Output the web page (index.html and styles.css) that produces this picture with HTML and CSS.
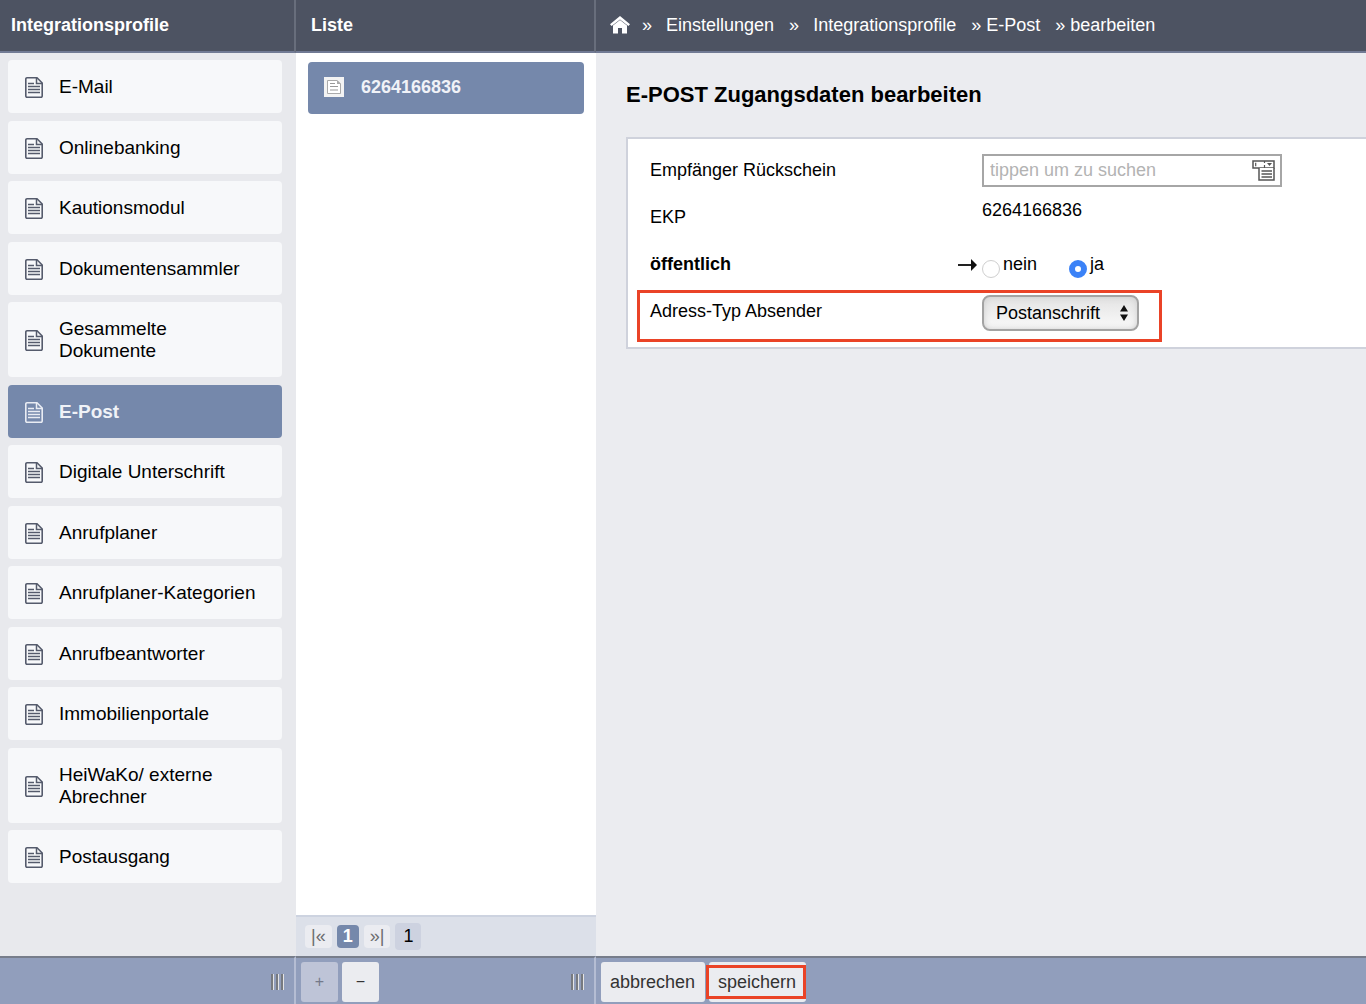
FILE: index.html
```
<!DOCTYPE html>
<html lang="de">
<head>
    <meta charset="UTF-8">
    <meta name="viewport" content="width=device-width, initial-scale=1.0">
    <title>E-POST Zugangsdaten bearbeiten</title>
    <link rel="stylesheet" href="styles.css">
</head>
<body>
    <svg class="symbols" aria-hidden="true">
        <symbol id="doc" viewBox="0 0 18 21">
            <path d="M2 .8H12L17.2 6V19a1.2 1.2 0 0 1-1.2 1.2H2A1.2 1.2 0 0 1 .8 19V2A1.2 1.2 0 0 1 2 .8Z" fill="none" stroke="currentColor" stroke-width="1.6"/>
            <path d="M11.5 1V6.5H17" fill="none" stroke="currentColor" stroke-width="1.5"/>
            <path d="M3 6.5H9M3 9.5H15M3 12.5H15M3 15.5H15" stroke="currentColor" stroke-width="1.4"/>
        </symbol>
    </svg>

    <div class="app">
        <section class="column sidebar">
            <header class="bar">Integrationsprofile</header>
            <nav class="content">
                <ul class="nav-list">
                    <li><a href="#"><svg class="doc"><use href="#doc"/></svg><span>E-Mail</span></a></li>
                    <li><a href="#"><svg class="doc"><use href="#doc"/></svg><span>Onlinebanking</span></a></li>
                    <li><a href="#"><svg class="doc"><use href="#doc"/></svg><span>Kautionsmodul</span></a></li>
                    <li><a href="#"><svg class="doc"><use href="#doc"/></svg><span>Dokumentensammler</span></a></li>
                    <li><a href="#"><svg class="doc"><use href="#doc"/></svg><span>Gesammelte Dokumente</span></a></li>
                    <li><a href="#" class="active"><svg class="doc"><use href="#doc"/></svg><span>E-Post</span></a></li>
                    <li><a href="#"><svg class="doc"><use href="#doc"/></svg><span>Digitale Unterschrift</span></a></li>
                    <li><a href="#"><svg class="doc"><use href="#doc"/></svg><span>Anrufplaner</span></a></li>
                    <li><a href="#"><svg class="doc"><use href="#doc"/></svg><span>Anrufplaner-Kategorien</span></a></li>
                    <li><a href="#"><svg class="doc"><use href="#doc"/></svg><span>Anrufbeantworter</span></a></li>
                    <li><a href="#"><svg class="doc"><use href="#doc"/></svg><span>Immobilienportale</span></a></li>
                    <li><a href="#"><svg class="doc"><use href="#doc"/></svg><span>HeiWaKo/ externe Abrechner</span></a></li>
                    <li><a href="#"><svg class="doc"><use href="#doc"/></svg><span>Postausgang</span></a></li>
                </ul>
            </nav>
            <footer class="toolbar">
                <div class="grip"><i></i><i></i><i></i></div>
            </footer>
        </section>

        <section class="column list">
            <header class="bar">Liste</header>
            <div class="content">
                <a href="#" class="entry">
                    <svg class="entry-icon" viewBox="0 0 20 20">
                        <rect width="20" height="20" fill="#f3f3f3"/>
                        <path d="M3.5 3.5H13L16.5 7V16.5H3.5Z" fill="#fff" stroke="#aaa"/>
                        <path d="M13 3V7H17Z" fill="#aaa"/>
                        <path d="M6 6.5H11M6 9.5H14M6 13H14" stroke="#999" stroke-width="1.2"/>
                    </svg>
                    <span>6264166836</span>
                </a>
            </div>
            <div class="pager">
                <button type="button" class="page">|«</button>
                <button type="button" class="page current">1</button>
                <button type="button" class="page">»|</button>
                <span class="total">1</span>
            </div>
            <footer class="toolbar">
                <button type="button" class="tool disabled" disabled>+</button>
                <button type="button" class="tool">−</button>
                <div class="grip"><i></i><i></i><i></i></div>
            </footer>
        </section>

        <section class="column detail">
            <header class="bar breadcrumb">
                <a href="#" aria-label="Start">
                    <svg class="home" viewBox="0 0 20 18">
                        <path d="M10 0L20 8.2L18.4 10L10 3.4L1.6 10L0 8.2Z" fill="#fff"/>
                        <path d="M10 4L17 9.6V17.5H12V12H8V17.5H3V9.6Z" fill="#fff"/>
                    </svg>
                </a>
                <span class="sep">»</span>
                <a href="#">Einstellungen</a>
                <span class="sep">»</span>
                <a href="#">Integrationsprofile</a>
                <span>» E-Post</span>
                <span>» bearbeiten</span>
            </header>
            <main class="content">
                <h1>E-POST Zugangsdaten bearbeiten</h1>
                <form class="panel" id="profile">
                    <div class="row">
                        <label class="label" for="recipient">Empfänger Rückschein</label>
                        <div class="control">
                            <div class="search">
                                <input type="text" id="recipient" placeholder="tippen um zu suchen">
                                <svg class="lookup" viewBox="0 0 23 21">
                                    <path d="M1 1H22V8H1Z" fill="#fff" stroke="#555" stroke-width="1.5"/>
                                    <path d="M3.7 2.7V6.2M12.5 1V3M12.5 5V8" stroke="#555" stroke-width="1.2"/>
                                    <path d="M15 3H20L17.5 6Z" fill="#555"/>
                                    <path d="M7 8V20H22V8" fill="#fff" stroke="#555" stroke-width="1.5"/>
                                    <path d="M9.5 11H20M9.5 14H20M9.5 17H20" stroke="#555" stroke-width="1.3"/>
                                </svg>
                            </div>
                        </div>
                    </div>
                    <div class="row">
                        <span class="label">EKP</span>
                        <div class="control">6264166836</div>
                    </div>
                    <div class="row">
                        <span class="label required" id="public">öffentlich
                            <svg class="arrow" viewBox="0 0 19 12">
                                <path d="M0 6H14" stroke="#222" stroke-width="2"/>
                                <path d="M13 0L19 6L13 12Z" fill="#111"/>
                            </svg>
                        </span>
                        <div class="control" role="radiogroup" aria-labelledby="public">
                            <label class="choice"><input type="radio" name="public">nein</label>
                            <label class="choice"><input type="radio" name="public" checked>ja</label>
                        </div>
                    </div>
                    <div class="row marked">
                        <label class="label" for="address">Adress-Typ Absender</label>
                        <div class="control">
                            <div class="select">
                                <select id="address">
                                    <option>Postanschrift</option>
                                </select>
                                <svg class="updown" viewBox="0 0 8 16">
                                    <path d="M4 0L8 6.5H0ZM4 16L8 9.5H0Z" fill="#111"/>
                                </svg>
                            </div>
                        </div>
                    </div>
                </form>
            </main>
            <footer class="toolbar">
                <button type="button" class="action">abbrechen</button>
                <button type="submit" form="profile" class="action save">speichern</button>
            </footer>
        </section>
    </div>
</body>
</html>
```

FILE: styles.css
```
*,
*::after {
    box-sizing: border-box;
}
body {
    margin: 0;
    font-family: "Liberation Sans", Arial, sans-serif;
    font-size: 18px;
    color: #000;
}
a {
    color: inherit;
    text-decoration: none;
}
button,
input,
select {
    font: inherit;
}
.symbols {
    display: none;
}
.app {
    display: grid;
    grid-template-columns: 296px 300px 1fr;
    min-height: 100vh;
}
.column {
    display: flex;
    flex-direction: column;
    min-width: 0;
}
.sidebar {
    background-color: #e8e9ed;
}
.list {
    background-color: #fff;
}
.detail {
    background-color: #ebecf0;
}
.content {
    flex-grow: 1;
}

/* Top bar */
.bar {
    height: 53px;
    padding: 0 11px;
    line-height: 50px;
    font-weight: bold;
    color: #fff;
    background-color: #4d5362;
    border-bottom: 2px solid #717a94;
}
.list .bar {
    padding-left: 15px;
}
.sidebar .bar,
.list .bar {
    border-right: 2px solid #686e7c;
}
.breadcrumb {
    display: flex;
    gap: 15px;
    padding-left: 14px;
    font-weight: normal;
    white-space: nowrap;
}
.breadcrumb .sep {
    margin-right: -1px;
}
.breadcrumb a:first-child {
    margin-right: -3px;
}
.home {
    display: block;
    width: 20px;
    height: 18px;
    margin-top: 16px;
}

/* Profile navigation */
.nav-list {
    list-style: none;
    margin: 0;
    padding: 7px 14px 0 8px;
}
.nav-list li {
    margin-bottom: 7px;
}
.nav-list li:nth-child(odd) {
    margin-bottom: 8px;
}
.nav-list a {
    display: flex;
    align-items: center;
    gap: 16px;
    padding: 16px 17px 15px;
    font-size: 19px;
    line-height: 22px;
    background-color: #f7f8fa;
    border-radius: 4px;
}
.nav-list .active {
    font-weight: bold;
    color: #f0f2f7;
    background-color: #7588ab;
}
.doc {
    flex-shrink: 0;
    width: 18px;
    height: 21px;
    color: #555b6c;
}
.active .doc {
    color: #e9ecf3;
}

/* List */
.entry {
    display: flex;
    align-items: center;
    gap: 17px;
    height: 52px;
    margin: 9px 12px;
    padding: 0 16px 2px;
    font-weight: bold;
    color: #f0f2f7;
    background-color: #7588ab;
    border-radius: 4px;
}
.entry-icon {
    width: 20px;
    height: 20px;
}
.pager {
    display: flex;
    align-items: center;
    gap: 5px;
    height: 41px;
    padding: 0 9px;
    background-color: #dce0e9;
    border-top: 2px solid #cdd3e0;
}
.page {
    height: 23px;
    padding: 0 6px 1px;
    line-height: 20px;
    color: #6c6c70;
    background-color: #ebecf1;
    border: none;
    border-radius: 4px;
}
.page.current {
    font-weight: bold;
    color: #fff;
    background-color: #7588ab;
}
.total {
    padding: 0 8px;
    line-height: 27px;
    background-color: #cdd2e0;
    border-radius: 4px;
}

/* Bottom toolbar */
.toolbar {
    display: flex;
    gap: 4px;
    height: 48px;
    padding: 4px 10px 2px 5px;
    background-color: #919ebc;
    border-top: 2px solid #777d8b;
}
.sidebar .toolbar,
.list .toolbar {
    border-right: 2px solid #b5bdd3;
}
.grip {
    display: flex;
    gap: 2px;
    align-self: center;
    margin-left: auto;
}
.grip i {
    width: 3px;
    height: 16px;
    background-color: #777a80;
    border-right: 1px solid #e4e4e4;
}
.tool,
.action {
    padding: 0;
    color: #333;
    background-color: #ebecf0;
    border: none;
    border-radius: 3px;
}
.tool {
    width: 37px;
    font-size: 16px;
}
.tool.disabled {
    color: #74798a;
    background-color: #bec4d7;
}
.action {
    position: relative;
    padding: 0 10px 0 9px;
}
.save::after {
    content: "";
    position: absolute;
    inset: 3px 0 3px -3px;
    border: 3px solid #ea4327;
}

/* Form */
h1 {
    margin: 0;
    padding: 28px 30px;
    font-size: 22px;
    line-height: 28px;
}
.panel {
    margin-left: 30px;
    padding: 8px 22px 12px;
    background-color: #fff;
    border: 2px solid #cfd2dc;
    border-right: none;
}
.row {
    display: grid;
    grid-template-columns: 332px 1fr;
    height: 47px;
}
.label {
    line-height: 47px;
}
.required {
    display: flex;
    align-items: center;
    justify-content: space-between;
    padding-right: 5px;
    font-weight: bold;
}
.arrow {
    width: 19px;
    height: 12px;
}
.control {
    display: flex;
    gap: 32px;
    align-items: flex-start;
    padding-top: 7px;
    line-height: 18px;
}
.search {
    position: relative;
    width: 300px;
}
.search input {
    display: block;
    width: 100%;
    height: 33px;
    padding: 0 36px 0 6px;
    background-color: #fff;
    border: 2px solid #a6a6a6;
}
.search input::placeholder {
    color: #b3b3b3;
}
.lookup {
    position: absolute;
    top: 6px;
    right: 7px;
    width: 23px;
    height: 21px;
}
.choice {
    display: flex;
    gap: 3px;
    line-height: 33px;
}
.choice input {
    appearance: none;
    width: 18px;
    height: 18px;
    margin: 12px 0 0;
    background-color: #fff;
    border: 1px solid #cfcfcf;
    border-radius: 50%;
}
.choice input:checked {
    border: 6px solid #3b82f7;
}
.select {
    position: relative;
}
.select select {
    appearance: none;
    display: block;
    height: 36px;
    padding: 0 36px 0 12px;
    color: #000;
    background: linear-gradient(#e3e3e3, #fafafa);
    border: 2px solid #a3a3a3;
    border-radius: 8px;
    box-shadow: inset 0 0 6px #ccc;
}
.updown {
    position: absolute;
    top: 10px;
    right: 11px;
    width: 8px;
    height: 16px;
    pointer-events: none;
}
.marked {
    position: relative;
}
.marked::after {
    content: "";
    position: absolute;
    top: 2px;
    left: -13px;
    width: 525px;
    height: 52px;
    border: 3px solid #ea4327;
    pointer-events: none;
}
```
